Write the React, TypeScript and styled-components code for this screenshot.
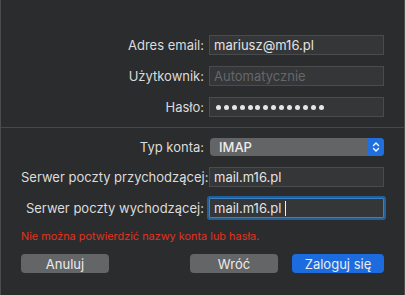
import React from 'react'
import styled, { createGlobalStyle } from 'styled-components'

const GlobalStyle = createGlobalStyle`
  html, body {
    margin: 0;
    padding: 0;
    background: #2b2c2e;
  }
  * {
    box-sizing: border-box;
  }
`

const Sheet = styled.div`
  width: 405px;
  height: 295px;
  background: #2b2c2e;
  border-left: 1px solid #4c4d4f;
  border-right: 1px solid #4c4d4f;
  font-family: 'Inter', 'Liberation Sans', sans-serif;
  color: #dedede;
  display: flex;
  flex-direction: column;
`

const Form = styled.div<{ top: number; bottom: number }>`
  display: grid;
  grid-template-columns: 183px 175px;
  column-gap: 5px;
  row-gap: 11px;
  padding: ${({ top }) => top}px 20px ${({ bottom }) => bottom}px;
  align-items: center;
`

const Label = styled.label`
  font-size: 13px;
  text-align: right;
  white-space: nowrap;
  color: #dcdcdc;
`

const Field = styled.div<{ focused?: boolean }>`
  height: 20px;
  background: #353638;
  border: 1px solid #4a4b4d;
  padding: 0 4px;
  display: flex;
  align-items: center;
  font-size: 13px;
  color: #e4e4e4;
  white-space: nowrap;
  ${({ focused }) => focused && `
    border-color: #3b80c4;
    box-shadow: 0 0 0 2px #23609a;
    border-radius: 1px;
  `}
`

const Placeholder = styled.span`
  color: #66676a;
`

const Dots = styled.span`
  display: flex;
  gap: 2.9px;
  padding-left: 2px;
`

const Dot = styled.span`
  width: 5px;
  height: 5px;
  border-radius: 50%;
  background: #e6e6e6;
`

const Caret = styled.span`
  display: inline-block;
  width: 1px;
  height: 15px;
  margin-left: 4px;
  background: #f0f0f0;
`

const Separator = styled.div`
  height: 1px;
  background: #47484a;
`

const Select = styled.div`
  height: 18px;
  display: flex;
  align-items: stretch;
  border-radius: 4px;
  overflow: hidden;
  background: #636466;
  margin-left: 1px;
`

const SelectValue = styled.span`
  flex: 1;
  padding-left: 9px;
  font-size: 13px;
  font-weight: 500;
  line-height: 18px;
  color: #ececec;
`

const Stepper = styled.span`
  width: 16px;
  background: #1f6fdf;
  display: flex;
  align-items: center;
  justify-content: center;
`

const ErrorText = styled.div`
  margin-top: 11px;
  padding-left: 20px;
  font-size: 10.9px;
  line-height: 14px;
  color: #e1331f;
`

const Buttons = styled.div`
  margin-top: 11px;
  padding: 0 20px;
  display: flex;
  justify-content: space-between;
`

const RightGroup = styled.div`
  display: flex;
  gap: 14px;
`

const Button = styled.button<{ primary?: boolean; w: number }>`
  width: ${({ w }) => w}px;
  height: 19px;
  border: none;
  border-radius: 4px;
  padding: 0;
  font-family: inherit;
  font-size: 13px;
  color: #ececec;
  background: ${({ primary }) => (primary ? '#1c6ce0' : '#646567')};
`

export default function App() {
  return (
    <>
      <GlobalStyle />
      <Sheet>
        <Form top={35} bottom={10}>
          <Label>Adres email:</Label>
          <Field>mariusz@m16.pl</Field>
          <Label>Użytkownik:</Label>
          <Field><Placeholder>Automatycznie</Placeholder></Field>
          <Label>Hasło:</Label>
          <Field>
            <Dots>
              {Array.from({ length: 14 }, (_, i) => <Dot key={i} />)}
            </Dots>
          </Field>
        </Form>
        <Separator />
        <Form top={10} bottom={0}>
          <Label>Typ konta:</Label>
          <Select>
            <SelectValue>IMAP</SelectValue>
            <Stepper>
              <svg width="8" height="12" viewBox="0 0 8 12" fill="none" stroke="#ffffff" strokeWidth="1.4" strokeLinecap="round" strokeLinejoin="round">
                <path d="M1.5 4.5 L4 2 L6.5 4.5" />
                <path d="M1.5 7.5 L4 10 L6.5 7.5" />
              </svg>
            </Stepper>
          </Select>
          <Label>Serwer poczty przychodzącej:</Label>
          <Field>mail.m16.pl</Field>
          <Label>Serwer poczty wychodzącej:</Label>
          <Field focused>mail.m16.pl<Caret /></Field>
        </Form>
        <ErrorText>Nie można potwierdzić nazwy konta lub hasła.</ErrorText>
        <Buttons>
          <Button w={88}>Anuluj</Button>
          <RightGroup>
            <Button w={88}>Wróć</Button>
            <Button primary w={92}>Zaloguj się</Button>
          </RightGroup>
        </Buttons>
      </Sheet>
    </>
  )
}
